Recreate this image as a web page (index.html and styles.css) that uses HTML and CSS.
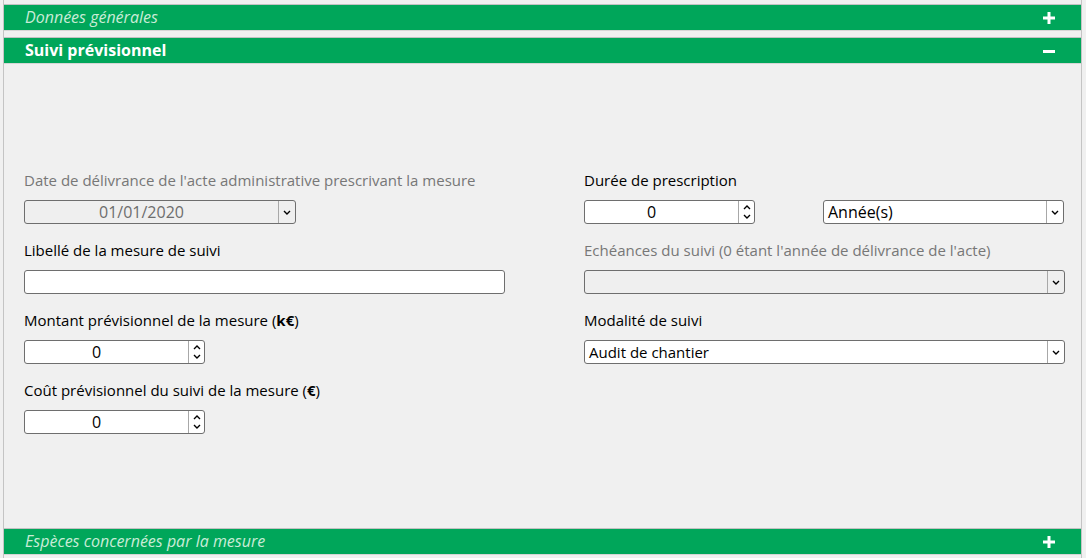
FILE: index.html
```html
<!DOCTYPE html>
<html lang="fr">
<head>
<meta charset="utf-8">
<title>Suivi prévisionnel</title>
<link rel="stylesheet" href="styles.css">
</head>
<body>
<div class="frame">
  <section class="panel collapsed">
    <header class="panel-head italic">
      <span class="panel-title">Données générales</span>
      <svg class="toggle" viewBox="0 0 12 12" width="12" height="12"><rect x="4.5" y="0" width="3" height="12" fill="#fff"/><rect x="0" y="4.5" width="12" height="3" fill="#fff"/></svg>
    </header>
  </section>

  <section class="panel open">
    <header class="panel-head bold">
      <span class="panel-title">Suivi prévisionnel</span>
      <svg class="toggle" viewBox="0 0 12 12" width="12" height="12"><rect x="0" y="5" width="12" height="3" fill="#fff"/></svg>
    </header>
    <div class="panel-body">
      <div class="form-grid">
        <div class="field">
          <label class="lbl disabled">Date de délivrance de l'acte administrative prescrivant la mesure</label>
          <div class="ctrl select is-disabled w-271">
            <span class="val center date">01/01/2020</span>
            <span class="arrow"><svg viewBox="0 0 8 5" width="8" height="5"><polyline points="1,1 4,4 7,1" fill="none" stroke="#000" stroke-width="1.4"/></svg></span>
          </div>
        </div>
        <div class="field">
          <label class="lbl">Durée de prescription</label>
          <div class="pair">
            <div class="ctrl number w-170">
              <span class="val center">0</span>
              <span class="spin">
                <svg viewBox="0 0 8 5" width="8" height="5"><polyline points="1,4 4,1 7,4" fill="none" stroke="#000" stroke-width="1.4"/></svg>
                <svg viewBox="0 0 8 5" width="8" height="5"><polyline points="1,1 4,4 7,1" fill="none" stroke="#000" stroke-width="1.4"/></svg>
              </span>
            </div>
            <div class="ctrl select w-240">
              <span class="val big">Année(s)</span>
              <span class="arrow"><svg viewBox="0 0 8 5" width="8" height="5"><polyline points="1,1 4,4 7,1" fill="none" stroke="#000" stroke-width="1.4"/></svg></span>
            </div>
          </div>
        </div>

        <div class="field">
          <label class="lbl">Libellé de la mesure de suivi</label>
          <div class="ctrl text w-full"></div>
        </div>
        <div class="field">
          <label class="lbl disabled">Echéances du suivi (0 étant l'année de délivrance de l'acte)</label>
          <div class="ctrl select is-disabled w-full">
            <span class="val"></span>
            <span class="arrow"><svg viewBox="0 0 8 5" width="8" height="5"><polyline points="1,1 4,4 7,1" fill="none" stroke="#000" stroke-width="1.4"/></svg></span>
          </div>
        </div>

        <div class="field">
          <label class="lbl">Montant prévisionnel de la mesure (<b>k€</b>)</label>
          <div class="ctrl number w-180">
            <span class="val center">0</span>
            <span class="spin">
              <svg viewBox="0 0 8 5" width="8" height="5"><polyline points="1,4 4,1 7,4" fill="none" stroke="#000" stroke-width="1.4"/></svg>
              <svg viewBox="0 0 8 5" width="8" height="5"><polyline points="1,1 4,4 7,1" fill="none" stroke="#000" stroke-width="1.4"/></svg>
            </span>
          </div>
        </div>
        <div class="field">
          <label class="lbl">Modalité de suivi</label>
          <div class="ctrl select w-full">
            <span class="val">Audit de chantier</span>
            <span class="arrow"><svg viewBox="0 0 8 5" width="8" height="5"><polyline points="1,1 4,4 7,1" fill="none" stroke="#000" stroke-width="1.4"/></svg></span>
          </div>
        </div>

        <div class="field">
          <label class="lbl">Coût prévisionnel du suivi de la mesure (<b>€</b>)</label>
          <div class="ctrl number w-180">
            <span class="val center">0</span>
            <span class="spin">
              <svg viewBox="0 0 8 5" width="8" height="5"><polyline points="1,4 4,1 7,4" fill="none" stroke="#000" stroke-width="1.4"/></svg>
              <svg viewBox="0 0 8 5" width="8" height="5"><polyline points="1,1 4,4 7,1" fill="none" stroke="#000" stroke-width="1.4"/></svg>
            </span>
          </div>
        </div>
      </div>
    </div>
  </section>

  <section class="panel collapsed">
    <header class="panel-head italic">
      <span class="panel-title">Espèces concernées par la mesure</span>
      <svg class="toggle" viewBox="0 0 12 12" width="12" height="12"><rect x="4.5" y="0" width="3" height="12" fill="#fff"/><rect x="0" y="4.5" width="12" height="3" fill="#fff"/></svg>
    </header>
  </section>
</div>
</body>
</html>
```

FILE: styles.css
```css
html, body {
  margin: 0;
  padding: 0;
  background: #f0f0f0;
}
body {
  font-family: "Open Sans", "Noto Sans", sans-serif;
  font-size: 15px;
  color: #000;
}
.frame {
  margin-left: 3px;
  width: 1077px;
  height: 558px;
  border-left: 1px solid #c4c4c4;
  border-right: 1px solid #c4c4c4;
  padding-top: 4px;
  box-sizing: content-box;
}
.panel + .panel {
  margin-top: 6px;
}
.panel-head {
  height: 25px;
  background: #00a65a;
  border-top: 1px solid #c2c2c2;
  border-bottom: 1px solid #d6d6d6;
  display: flex;
  align-items: center;
  justify-content: space-between;
  padding: 0 26px 0 21px;
}
.panel-title {
  font-size: 16px;
  line-height: 25px;
}
.italic .panel-title {
  font-style: italic;
  color: #c9ecd7;
}
.bold .panel-title {
  font-weight: bold;
  color: #fff;
}
.toggle {
  display: block;
}
.panel-body {
  height: 464px;
  box-sizing: border-box;
  padding: 107px 0 0 20px;
}
.panel.open + .panel {
  margin-top: 0;
}
.form-grid {
  display: grid;
  grid-template-columns: 480px 480px;
  column-gap: 80px;
  row-gap: 17px;
}
.field {
  display: flex;
  flex-direction: column;
  gap: 10px;
}
.lbl {
  line-height: 19px;
  height: 19px;
  white-space: nowrap;
}
.lbl.disabled {
  color: #777;
}
.pair {
  display: flex;
  justify-content: space-between;
}
.ctrl {
  height: 24px;
  box-sizing: border-box;
  border: 1px solid #6e6e6e;
  border-radius: 3px;
  background: #fff;
  display: flex;
  align-items: stretch;
}
.ctrl.is-disabled {
  background: #efefef;
  color: #6d6d6d;
}
.w-271 { width: 272px; }
.w-170 { width: 171px; }
.w-240 { width: 241px; }
.w-180 { width: 181px; }
.w-full { width: 481px; }
.val {
  flex: 1;
  line-height: 22px;
  padding-left: 4px;
  white-space: nowrap;
  overflow: hidden;
}
.val.center {
  text-align: center;
  padding-left: 0;
  padding-right: 20px;
  font-size: 16px;
}
.val.big {
  font-size: 16px;
}
.arrow {
  width: 16px;
  border-left: 1px solid #a8a8a8;
  display: flex;
  align-items: center;
  justify-content: center;
}
.arrow svg { display: block; }
.spin {
  width: 15px;
  border-left: 1px solid #a8a8a8;
  display: flex;
  flex-direction: column;
  align-items: center;
  justify-content: space-around;
  padding: 2px 0;
}
.spin svg { display: block; }
```
